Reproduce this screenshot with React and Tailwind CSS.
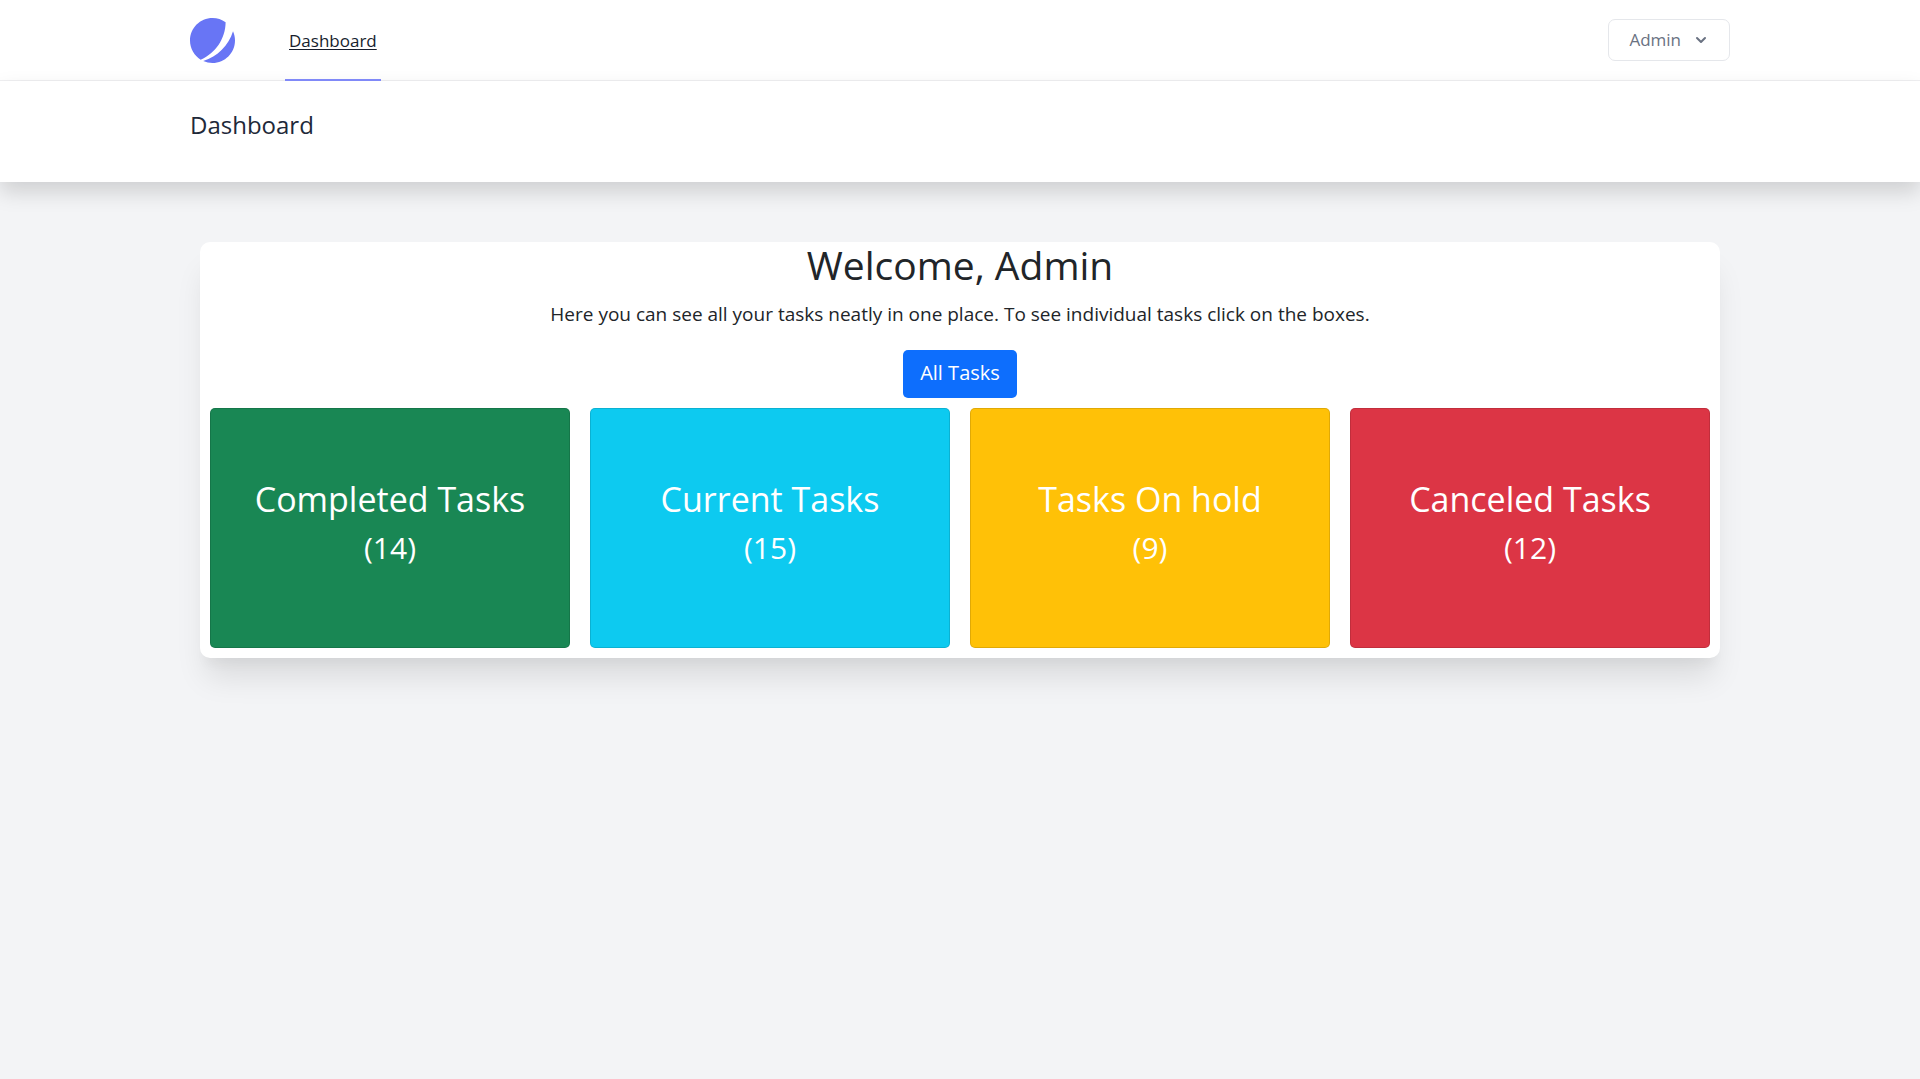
const tiles = [
  { title: "Completed Tasks", count: 14, color: "bg-[#198754]" },
  { title: "Current Tasks", count: 15, color: "bg-[#0dcaf0]" },
  { title: "Tasks On hold", count: 9, color: "bg-[#ffc107]" },
  { title: "Canceled Tasks", count: 12, color: "bg-[#dc3545]" },
];

function Logo() {
  return (
    <svg viewBox="0 0 48 48" fill="none" className="size-[45px]" aria-hidden="true">
      <path
        fill="#6875F5"
        d="M11.395 44.428C4.557 40.198 0 32.632 0 24 0 10.745 10.745 0 24 0a23.891 23.891 0 0113.997 4.502c-.2 17.907-11.097 33.245-26.602 39.926z"
      />
      <path
        fill="#6875F5"
        d="M14.134 45.885A23.914 23.914 0 0024 48c13.255 0 24-10.745 24-24 0-3.516-.756-6.856-2.115-9.866-4.659 15.143-16.608 27.092-31.75 31.751z"
      />
    </svg>
  );
}

function ChevronDown() {
  return (
    <svg viewBox="0 0 20 20" fill="currentColor" className="size-5" aria-hidden="true">
      <path
        fillRule="evenodd"
        clipRule="evenodd"
        d="M5.293 7.293a1 1 0 011.414 0L10 10.586l3.293-3.293a1 1 0 111.414 1.414l-4 4a1 1 0 01-1.414 0l-4-4a1 1 0 010-1.414z"
      />
    </svg>
  );
}

function TaskTile({ title, count, color }) {
  return (
    <button
      type="button"
      className={`${color} flex h-60 flex-col items-center justify-center rounded-[5px] border border-black/12 pb-2.5 text-white`}
    >
      <span className="text-[34px] leading-[50px]">{title}</span>
      <span className="text-[30px] leading-[48px]">({count})</span>
    </button>
  );
}

export default function App() {
  return (
    <div className="min-h-screen bg-[#f3f4f6] font-['Open_Sans',sans-serif] text-[#212529]">
      <nav className="border-b border-[#f0f0f2] bg-white">
        <div className="mx-auto flex h-20 max-w-[1600px] px-[30px]">
          <a href="#home" aria-label="Home" className="mr-[50px] flex items-center">
            <Logo />
          </a>
          <a
            href="#dashboard"
            aria-current="page"
            className="relative -mb-px flex items-center border-b-2 border-[#8089f8] px-1 pt-0.5 text-[17px] text-[#161e2e] underline underline-offset-2"
          >
            Dashboard
          </a>
          <button
            type="button"
            aria-haspopup="menu"
            className="my-auto ml-auto flex h-[42px] items-center gap-2.5 rounded-[7px] border border-gray-200 pr-[18px] pl-5 text-[17px] text-gray-500"
          >
            Admin
            <ChevronDown />
          </button>
        </div>
      </nav>

      <header className="bg-white shadow-[0_10px_20px_rgba(0,0,0,0.15)]">
        <div className="mx-auto max-w-[1600px] px-[30px] pt-[30px] pb-[43px]">
          <h2 className="text-2xl leading-7 text-gray-800">Dashboard</h2>
        </div>
      </header>

      <main className="mx-auto max-w-[1600px] px-10 pt-[60px]">
        <section className="rounded-[10px] bg-white pb-2.5 text-center shadow-[0_25px_31px_-6px_rgba(0,0,0,0.1),0_12px_12px_-6px_rgba(0,0,0,0.04)]">
          <h1 className="text-[39px] leading-[46px]">Welcome, Admin</h1>
          <p className="mt-3 text-[19px] leading-7">
            Here you can see all your tasks neatly in one place. To see individual tasks click on the boxes.
          </p>
          <button
            type="button"
            className="mt-[22px] h-12 rounded-[5px] bg-[#0d6efd] px-[17px] pb-0.5 text-xl font-medium text-white"
          >
            All Tasks
          </button>
          <div className="mt-2.5 grid grid-cols-4 gap-5 px-2.5">
            {tiles.map((tile) => (
              <TaskTile key={tile.title} {...tile} />
            ))}
          </div>
        </section>
      </main>
    </div>
  );
}
